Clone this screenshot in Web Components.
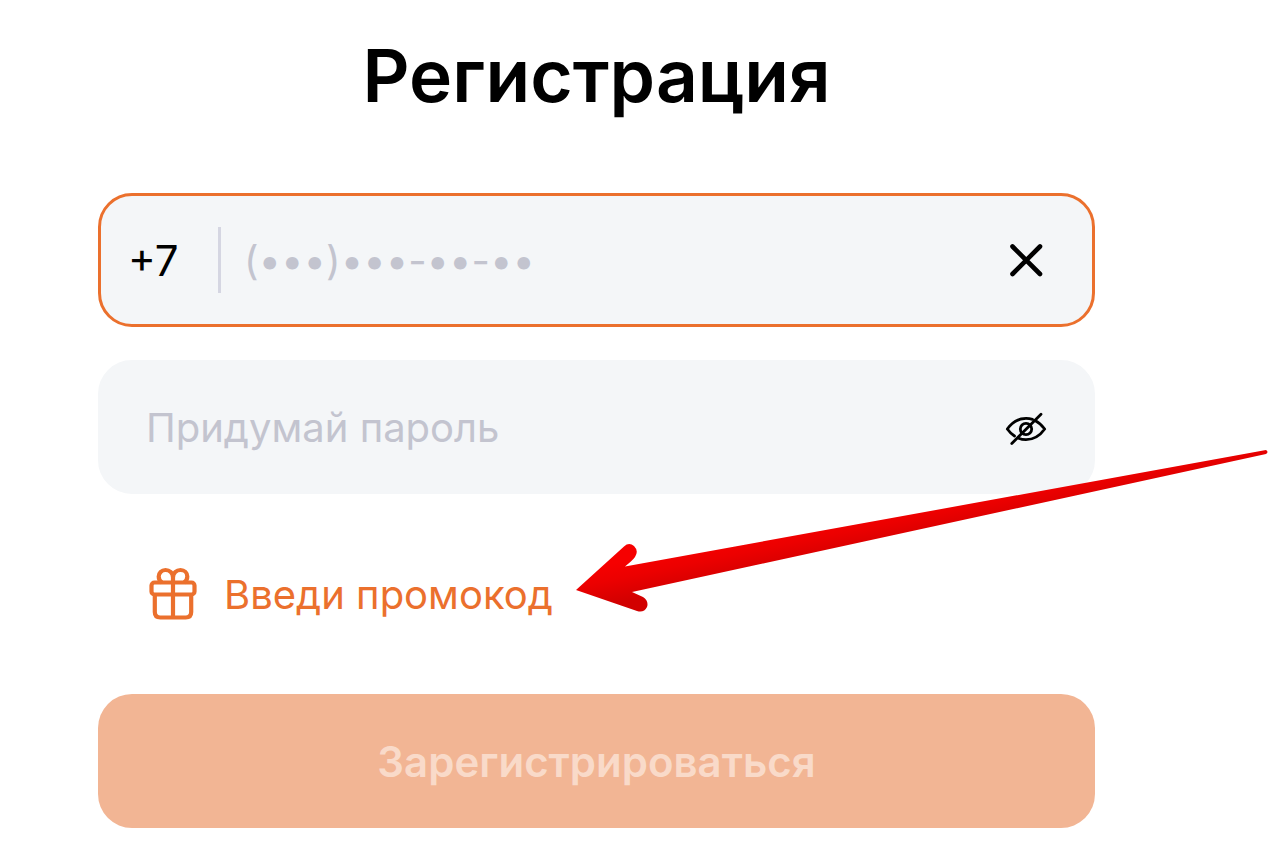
<!DOCTYPE html>
<html lang="ru">
<head>
<meta charset="utf-8">
<meta name="viewport" content="width=device-width, initial-scale=1">
<title>Регистрация</title>
<style>
    body {
        margin: 0;
        background: #fff;
        color: #000;
        font-family: Inter, "Open Sans", sans-serif;
        font-size: 42px;
        --accent: #eb702d;
        --field: #f4f6f8;
        --muted: #c3c4cf;
        --small: 40px;
    }
</style>
</head>
<body>
    <signup-page>
        <span slot="title">Регистрация</span>
        <phone-field></phone-field>
        <password-field></password-field>
        <promo-link>Введи промокод</promo-link>
        <submit-button>Зарегистрироваться</submit-button>
        <red-arrow slot="over"></red-arrow>
    </signup-page>

<script>
const fieldStyle = `
    :host {
        display: block;
    }
    .box {
        display: flex;
        align-items: center;
        box-sizing: border-box;
        min-height: 134px;
        padding: 0 44px 0 45px;
        border: 3px solid var(--field);
        border-radius: 34px;
        background: var(--field);
    }
    input {
        flex: 1;
        min-width: 0;
        padding: 0;
        border: 0;
        outline: 0;
        background: none;
        color: inherit;
        font: inherit;
        font-size: var(--small);
    }
    input::placeholder {
        color: var(--muted);
        opacity: 1;
    }
    button {
        display: flex;
        padding: 0;
        border: 0;
        background: none;
        color: inherit;
        cursor: pointer;
    }
`;

class SignupPage extends HTMLElement {
    constructor() {
        super();
        this.attachShadow({mode: "open"});
        this.shadowRoot.innerHTML = `
            <style>
                :host {
                    display: block;
                    position: relative;
                    overflow: hidden;
                }
                main {
                    padding: 30px 191px 18px 98px;
                }
                h1 {
                    margin: 0 0 71px;
                    font-size: 73px;
                    font-weight: 600;
                    line-height: 92px;
                    text-align: center;
                }
                form {
                    display: flex;
                    flex-direction: column;
                    gap: 33px;
                }
            </style>
            <main>
                <h1><slot name="title"></slot></h1>
                <form><slot></slot></form>
            </main>
            <slot name="over"></slot>
        `;
    }
}

class PhoneField extends HTMLElement {
    constructor() {
        super();
        this.attachShadow({mode: "open"});
        this.shadowRoot.innerHTML = `
            <style>
                ${fieldStyle}
                .box {
                    padding-left: 27px;
                    border-color: var(--accent);
                }
                label {
                    flex: none;
                    width: 90px;
                }
                .line {
                    flex: none;
                    width: 3px;
                    height: 66px;
                    margin-right: 23px;
                    background: #d5d6e2;
                }
            </style>
            <div class="box">
                <label for="phone">+7</label>
                <span class="line"></span>
                <input id="phone" type="tel" placeholder="(•••)•••-••-••">
                <button type="button" aria-label="Очистить">
                    <svg width="44" height="44" viewBox="0 0 44 44" fill="none" stroke="currentColor" stroke-width="4.600" stroke-linecap="round">
                        <path d="M8.500 8.500l27.500 27.500M36 8.500L8.500 36"/>
                    </svg>
                </button>
            </div>
        `;
        const input = this.shadowRoot.querySelector("input");
        this.shadowRoot.querySelector("button").addEventListener("click", () => {
            input.value = "";
            input.focus();
        });
    }
}

class PasswordField extends HTMLElement {
    constructor() {
        super();
        this.attachShadow({mode: "open"});
        this.shadowRoot.innerHTML = `
            <style>${fieldStyle}</style>
            <div class="box">
                <input type="password" aria-label="Пароль" placeholder="Придумай пароль">
                <button type="button" aria-label="Показать пароль">
                    <svg width="44" height="44" viewBox="0 0 44 44" fill="none" stroke="currentColor" stroke-width="2.800" stroke-linecap="round" stroke-linejoin="round">
                        <path d="M31 15.500Q36 18 40.700 24C35 32 29 34.600 22 34.600Q18 34.600 14.500 33.200M10.500 31Q6.500 28.500 3.300 24C9 16 15 13.400 22 13.400Q25.500 13.400 28.500 14.400"/>
                        <circle cx="22" cy="24" r="5.700"/>
                        <path d="M7.800 38.500L37 9.300"/>
                    </svg>
                </button>
            </div>
        `;
        const input = this.shadowRoot.querySelector("input");
        this.shadowRoot.querySelector("button").addEventListener("click", () => {
            input.type = input.type === "password" ? "text" : "password";
        });
    }
}

class PromoLink extends HTMLElement {
    constructor() {
        super();
        this.attachShadow({mode: "open"});
        this.shadowRoot.innerHTML = `
            <style>
                :host {
                    display: flex;
                    align-items: center;
                    min-height: 134px;
                    padding-left: 50px;
                }
                a {
                    display: flex;
                    align-items: center;
                    gap: 26px;
                    color: var(--accent);
                    font-size: var(--small);
                    text-decoration: none;
                }
            </style>
            <a href="#promo">
                <svg width="50" height="54" viewBox="0 0 50 54" fill="none" stroke="currentColor" stroke-width="4.200" stroke-linejoin="round">
                    <rect x="3.500" y="15.500" width="43" height="12" rx="3"/>
                    <path d="M6.800 27.500v17.500q0 5.500 5.500 5.500h25.400q5.500 0 5.500-5.500V27.500M25 15.500V50.500"/>
                    <path d="M25 15.500V10.500C25 6 21.500 3 17.500 3S10.700 6 10.700 9.500q0 4 3.300 6M25 15.500V10.500C25 6 28.500 3 32.500 3S39.300 6 39.300 9.500q0 4-3.300 6"/>
                </svg>
                <slot></slot>
            </a>
        `;
    }
}

class SubmitButton extends HTMLElement {
    constructor() {
        super();
        this.attachShadow({mode: "open"});
        this.shadowRoot.innerHTML = `
            <style>
                :host {
                    display: block;
                }
                button {
                    width: 100%;
                    min-height: 134px;
                    padding: 0;
                    border: 0;
                    border-radius: 34px;
                    background: #f2b594;
                    color: #f9dac9;
                    font: inherit;
                    font-weight: 600;
                }
            </style>
            <button type="submit" disabled><slot></slot></button>
        `;
    }
}

// pointer to the promo code link
class RedArrow extends HTMLElement {
    constructor() {
        super();
        this.attachShadow({mode: "open"});
        this.shadowRoot.innerHTML = `
            <style>
                :host {
                    position: absolute;
                    top: 440px;
                    left: 570px;
                    pointer-events: none;
                }
                svg {
                    display: block;
                }
            </style>
            <svg width="704" height="180" viewBox="0 0 704 180" aria-hidden="true">
                <defs>
                    <linearGradient id="red" gradientUnits="userSpaceOnUse" x1="200" y1="91" x2="208" y2="130">
                        <stop offset="0" stop-color="#f60000"/>
                        <stop offset=".4" stop-color="#ec0000"/>
                        <stop offset="1" stop-color="#d20000"/>
                    </linearGradient>
                </defs>
                <path fill="url(#red)" d="M6 150L54 106.500Q59 102 64 106Q69 111 65 117Q63 120 55 126.500L696 10Q699 12 696 14L62 152L73 157Q79 161 77 167Q74 173 67 171Z"/>
            </svg>
        `;
    }
}

customElements.define("signup-page", SignupPage);
customElements.define("phone-field", PhoneField);
customElements.define("password-field", PasswordField);
customElements.define("promo-link", PromoLink);
customElements.define("submit-button", SubmitButton);
customElements.define("red-arrow", RedArrow);
</script>
</body>
</html>
